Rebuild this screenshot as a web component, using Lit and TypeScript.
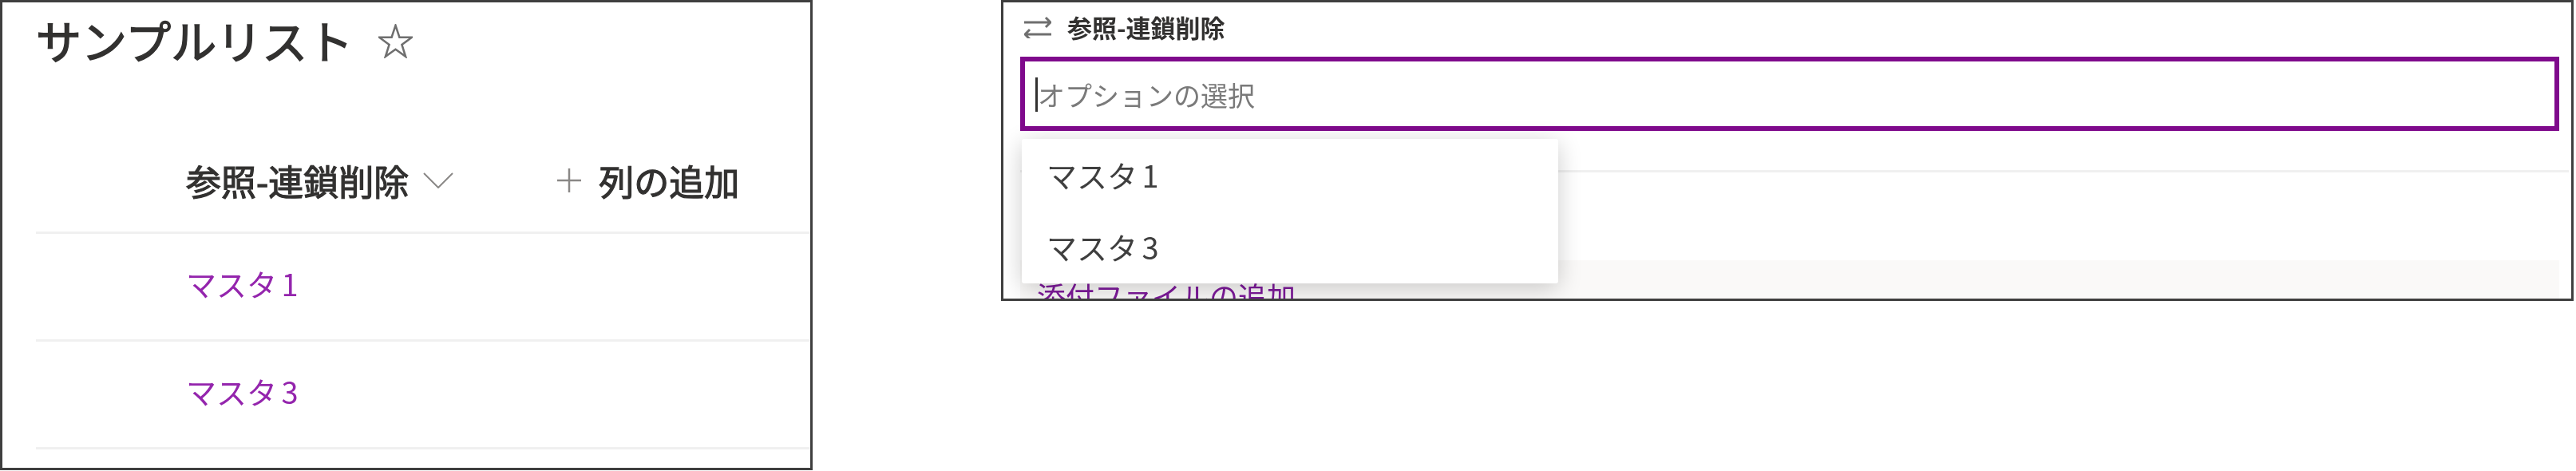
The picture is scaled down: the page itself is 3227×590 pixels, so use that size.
import { LitElement, html, css } from "lit";
import { customElement } from "lit/decorators.js";

@customElement("app-root")
export class AppRoot extends LitElement {
  static styles = css`
    :host {
      display: block;
      width: 3227px;
      height: 590px;
      background: #fff;
      overflow: hidden;
      font-family: "Noto Sans CJK JP", "Noto Sans", sans-serif;
    }
    * { box-sizing: border-box; }
    .page {
      display: flex;
      align-items: flex-start;
      gap: 236px;
      filter: blur(0.5px);
    }
    .list {
      width: 1018px;
      height: 589px;
      border: 3px solid #3f3f3f;
      padding: 0 0 0 42px;
      display: flex;
      flex-direction: column;
      flex: none;
    }
    .title {
      height: 93px;
      display: flex;
      align-items: center;
      gap: 32px;
      font-size: 57px;
      line-height: 93px;
      font-weight: 400;
      -webkit-text-stroke: 1.5px #323130;
      color: #323130;
    }
    .star { width: 43px; height: 43px; margin-top: 4px; flex: none; }
    .head {
      height: 197px;
      padding: 65px 0 0 188px;
      display: flex;
      align-items: center;
      border-bottom: 3px solid #f0f0f0;
      font-size: 44px;
      font-weight: 400;
      -webkit-text-stroke: 1.2px #323130;
      color: #323130;
    }
    .head svg { flex: none; }
    .head .chev { margin: 0 130px 0 18px; width: 38px; height: 20px; }
    .head .plus { margin-right: 22px; width: 30px; height: 30px; }
    .head span { line-height: 60px; white-space: nowrap; }
    .row {
      height: 135px;
      padding: 0 0 10px 188px;
      display: flex;
      align-items: center;
      border-bottom: 3px solid #f0f0f0;
      font-size: 38px;
      word-spacing: -3px;
      color: #9425ad;
      white-space: nowrap;
    }
    .form {
      position: relative;
      width: 1970px;
      height: 377px;
      flex: none;
      border: 3px solid #3f3f3f;
      overflow: hidden;
    }
    .label {
      height: 68px;
      padding: 0 0 8px 26px;
      display: flex;
      align-items: center;
      gap: 20px;
      font-size: 31px;
      font-weight: 700;
      color: #323130;
    }
    .label svg { width: 34px; height: 30px; flex: none; }
    .input {
      margin: 0 15px 0 21px;
      height: 93px;
      border: 6px solid #7f0a8c;
      padding: 2px 0 0 13px;
      display: flex;
      align-items: center;
      font-size: 34px;
      color: #7a7a7a;
    }
    .caret { width: 3px; height: 43px; background: #323130; flex: none; }
    .rule {
      margin: 49px 3px 0 21px;
      height: 3px;
      background: #f0f0f0;
    }
    .footer {
      margin: 110px 15px 0 21px;
      height: 60px;
      background: #faf9f8;
      padding: 17px 0 0 21px;
      font-size: 36px;
      line-height: 54px;
      color: #7d1a9a;
      white-space: nowrap;
    }
    .menu {
      position: absolute;
      left: 23px;
      top: 171px;
      width: 672px;
      height: 181px;
      background: #fff;
      border-radius: 3px;
      box-shadow: 0 6px 30px rgba(0, 0, 0, 0.2);
    }
    .item {
      height: 90px;
      padding: 0 0 2px 31px;
      display: flex;
      align-items: center;
      font-size: 38px;
      word-spacing: -3px;
      color: #3f3f3f;
      white-space: nowrap;
    }
  `;

  render() {
    return html`
      <div class="page">
        <section class="list">
          <div class="title">
            <span>サンプルリスト</span>
            <svg class="star" viewBox="0 0 44 44" fill="none" stroke="#6f6f6f" stroke-width="2.6">
              <path d="M22 2l5 15.1 15.9.1-12.8 9.4 4.8 15.2L22 32.5 9.100 41.800l4.800-15.200L1.100 17.200l15.900-.1z" />
            </svg>
          </div>
          <div class="head">
            <span>参照-連鎖削除</span>
            <svg class="chev" viewBox="0 0 38 20" fill="none" stroke="#8a8886" stroke-width="2">
              <path d="M1 1l18 18L37 1" />
            </svg>
            <svg class="plus" viewBox="0 0 30 30" fill="none" stroke="#8a8886" stroke-width="2.5">
              <path d="M15 0v30M0 15h30" />
            </svg>
            <span>列の追加</span>
          </div>
          <div class="row">マスタ 1</div>
          <div class="row">マスタ 3</div>
        </section>
        <section class="form">
          <div class="label">
            <svg viewBox="0 0 34 30" fill="none" stroke="#6f6f6f" stroke-width="3">
              <path d="M0 10h32M27 4l6 6-6 6M34 25H2M7 19l-6 6 6 6" />
            </svg>
            <span>参照-連鎖削除</span>
          </div>
          <div class="input">
            <span class="caret"></span>
            <span>オプションの選択</span>
          </div>
          <div class="rule"></div>
          <div class="footer">添付ファイルの追加</div>
          <div class="menu">
            <div class="item">マスタ 1</div>
            <div class="item">マスタ 3</div>
          </div>
        </section>
      </div>
    `;
  }
}
